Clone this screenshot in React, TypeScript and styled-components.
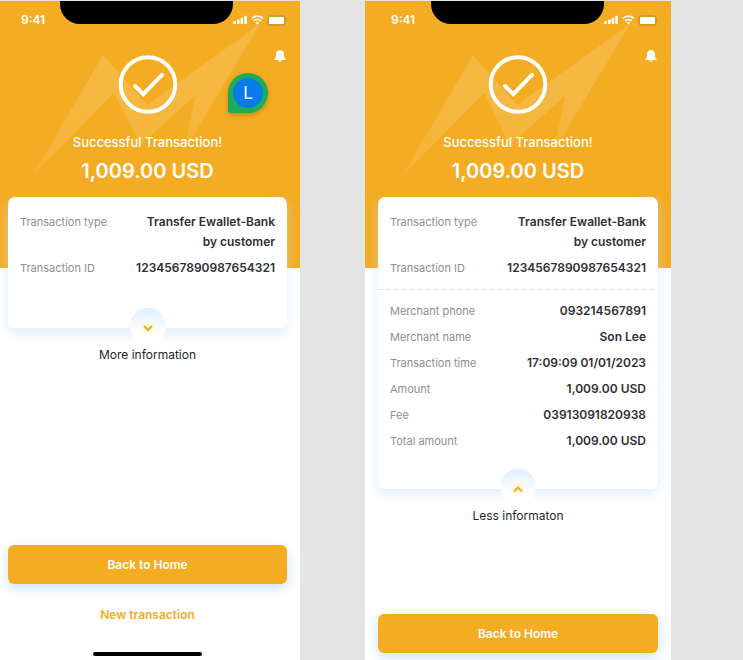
import React, { useId } from "react";
import styled, { createGlobalStyle, css } from "styled-components";

const orange = "#f4ac22";

const GlobalStyle = createGlobalStyle`
  *, *::before, *::after { box-sizing: border-box; }
  body {
    margin: 0;
    background: #e4e4e4;
    font-family: Inter, "Liberation Sans", sans-serif;
    color: #2f2f33;
  }
  button { font: inherit; border: 0; padding: 0; background: none; cursor: pointer; }
`;

const Board = styled.main`
  display: grid;
  grid-template-columns: minmax(0, 300fr) minmax(0, 306fr);
  column-gap: 65px;
  min-height: 100vh;
  padding: 1px 72px 0 0;
`;

const Phone = styled.article<{ $cropped?: boolean }>`
  --side-left: ${(p) => (p.$cropped ? 8 : 13)}px;
  --side-right: 13px;
  position: relative;
  display: flex;
  flex-direction: column;
  overflow: hidden;
  background: #fff;
`;

const Hero = styled.header`
  position: relative;
  display: flex;
  flex-direction: column;
  align-items: center;
  padding: 0 var(--side-right) 84px var(--side-left);
  background: ${orange};
  color: #fff;
`;

const Bolt = styled.svg`
  position: absolute;
  top: 23px;
  left: 50%;
  width: 230px;
  height: 152px;
  margin-left: calc((var(--side-left) - var(--side-right)) / 2 - 115px);
`;

const StatusBar = styled.div`
  display: grid;
  grid-template-columns: 1fr 173px 1fr;
  align-self: stretch;
  height: 38px;
`;

const Clock = styled.time`
  padding-left: 13px;
  font-size: 12px;
  font-weight: 600;
  line-height: 38px;
`;

const Notch = styled.div`
  height: 23px;
  border-radius: 0 0 20px 20px;
  background: #000;
`;

const StatusIcons = styled.div`
  display: flex;
  justify-content: flex-end;
  align-items: center;
  gap: 3px;
  height: 38px;
`;

const BellButton = styled.button`
  align-self: flex-end;
  display: flex;
  height: 16px;
  margin-top: 9px;
  color: #fff;
`;

const CheckMark = styled.svg`
  position: relative;
  width: 60px;
  height: 60px;
  margin-top: -9px;
`;

const Title = styled.h1`
  position: relative;
  margin: 17px 0 0;
  font-size: 13px;
  font-weight: 500;
  line-height: 20px;
`;

const Total = styled.p`
  position: relative;
  margin: 6px 0 0;
  font-size: 20px;
  font-weight: 600;
  line-height: 26px;
`;

const Card = styled.section<{ $open?: boolean }>`
  position: relative;
  margin: -71px var(--side-right) 0 var(--side-left);
  padding: 15px 0 ${(p) => (p.$open ? 38 : 50)}px;
  border-radius: 7px;
  background: #fff;
  box-shadow: 0 6px 12px rgba(200, 224, 252, 0.5);
`;

const Rows = styled.dl<{ $divided?: boolean }>`
  display: grid;
  row-gap: 6px;
  margin: 0;
  padding: 0 12px;
  ${(p) =>
    p.$divided &&
    css`
      margin-top: 11px;
      padding-top: 12px;
      background: repeating-linear-gradient(90deg, #dedede 0 4px, transparent 4px 8px) top / 100% 1px no-repeat;
    `}
`;

const Row = styled.div`
  display: flex;
  justify-content: space-between;
  gap: 12px;
  line-height: 20px;
`;

const Label = styled.dt`
  flex: none;
  color: #8e8e93;
  font-size: 11px;
`;

const Value = styled.dd`
  max-width: 144px;
  margin: 0;
  font-size: 12px;
  font-weight: 600;
  text-align: right;
`;

const Toggle = styled.button`
  position: relative;
  align-self: stretch;
  display: flex;
  flex-direction: column;
  align-items: center;
  gap: 1px;
  margin: -20px var(--side-right) 0 var(--side-left);
  && {
    font-size: 12px;
    line-height: 20px;
  }
  color: #25262c;
`;

const Knob = styled.svg`
  width: 40px;
  height: 36px;
`;

const Footer = styled.footer<{ $spacious?: boolean }>`
  display: flex;
  flex-direction: column;
  align-items: center;
  margin-top: auto;
  padding: 24px var(--side-right) ${(p) => (p.$spacious ? 4 : 7)}px var(--side-left);
`;

const HomeButton = styled.button`
  align-self: stretch;
  && {
    padding: 10px 12px 9px;
    background: ${orange};
  }
  border-radius: 6px;
  box-shadow: 0 4px 12px rgba(150, 200, 250, 0.5);
  color: #fff;
  font-size: 12px;
  font-weight: 600;
  line-height: 20px;
`;

const NewButton = styled.button`
  margin: 21px 0 27px;
  color: ${orange};
  font-size: 12px;
  font-weight: 600;
  line-height: 20px;
`;

const HomeIndicator = styled.div`
  width: 109px;
  height: 4px;
  border-radius: 2px;
  background: #000;
`;

const Pin = styled.div`
  position: absolute;
  top: 72px;
  right: 32px;
  display: flex;
  padding: 5px;
  border-radius: 20px 20px 20px 3px;
  background: #1eab5b;
  box-shadow: 0 2px 5px rgba(0, 0, 0, 0.2);
`;

const Avatar = styled.span`
  width: 30px;
  height: 30px;
  border-radius: 50%;
  background: #087be8;
  color: #fff;
  font-size: 17px;
  line-height: 30px;
  text-align: center;
`;

function Status() {
  return (
    <StatusBar>
      <Clock>9:41</Clock>
      <Notch />
      <StatusIcons>
        <svg width="15" height="10" viewBox="0 0 15 10" fill="#fff" aria-label="Signal">
          <rect x="0" y="6" width="3" height="3" rx="1" />
          <rect x="4" y="4.5" width="2.6" height="4.5" rx="0.8" />
          <rect x="7.6" y="2.7" width="2.6" height="6.3" rx="0.8" />
          <rect x="11.3" y="0.7" width="2.6" height="8.3" rx="0.8" />
        </svg>
        <svg width="13" height="10" viewBox="0 0 13 10" fill="none" stroke="#fff" strokeWidth="1.7" aria-label="Wi-Fi">
          <path d="M0.8 3.5C4 0.4 9 0.4 12.2 3.5" />
          <path d="M3 5.9C5 4.1 8 4.1 10 5.9" />
          <path d="M4.6 7.5C5.6 6.6 7.4 6.6 8.4 7.5L6.5 9.4Z" fill="#fff" stroke="none" />
        </svg>
        <svg width="20" height="11" viewBox="0 0 20 11" aria-label="Battery">
          <rect x="1" y="1" width="17" height="9" rx="2" fill="none" stroke="#b98a2a" />
          <rect x="2" y="2" width="15" height="7" rx="1" fill="#fff" />
          <path d="M19 4V7" stroke="#d69d2b" />
        </svg>
      </StatusIcons>
    </StatusBar>
  );
}

function HeroPanel() {
  const id = useId();
  return (
    <Hero>
      <Bolt viewBox="0 0 230 152" aria-hidden="true">
        <defs>
          <linearGradient id={id} x1="0" y1="0" x2="0" y2="1">
            <stop offset="0.5" stopColor="#fff" stopOpacity="0.14" />
            <stop offset="1" stopColor="#fff" stopOpacity="0.08" />
          </linearGradient>
        </defs>
        <path d="M0 151L70 31L114 81L227 0L151 127L162 72L107 121L81 69Z" fill={`url(#${id})`} />
      </Bolt>
      <Status />
      <BellButton aria-label="Notifications">
        <svg width="14" height="16" viewBox="0 0 14 16" fill="currentColor">
          <path d="M7 2C4.6 2 3 3.8 3 6V9L1.4 11.2V12H12.6V11.2L11 9V6C11 3.8 9.4 2 7 2Z" />
          <path d="M5 12.6H9C8.7 14.4 5.3 14.4 5 12.6Z" />
        </svg>
      </BellButton>
      <CheckMark viewBox="0 0 60 60" fill="none" stroke="#fff" aria-hidden="true">
        <circle cx="30" cy="29.5" r="27.3" strokeWidth="4" />
        <path d="M17 31L25.3 39.2L44 19.8" strokeWidth="4" strokeLinecap="round" />
      </CheckMark>
      <Title>Successful Transaction!</Title>
      <Total>1,009.00 USD</Total>
    </Hero>
  );
}

function InfoToggle({ open, children }: { open?: boolean; children: React.ReactNode }) {
  const id = useId();
  return (
    <Toggle aria-expanded={!!open}>
      <Knob viewBox="0 0 40 36" fill="none" aria-hidden="true">
        <defs>
          <linearGradient id={`${id}f`} x1="0" y1="0" x2="0" y2="1">
            <stop stopColor="#e0eefe" />
            <stop offset="0.65" stopColor="#fff" />
          </linearGradient>
          <radialGradient id={`${id}g`}>
            <stop stopColor="#fff3c9" />
            <stop offset="1" stopColor="#fff9e6" stopOpacity="0" />
          </radialGradient>
        </defs>
        <circle cx="20" cy="18" r="18" fill={`url(#${id}f)`} />
        <circle cx="20" cy="20" r="11" fill={`url(#${id}g)`} />
        <path d={open ? "M16 22.5L20 18.5L24 22.5" : "M16 18L20 22L24 18"} stroke="#e9ae2c" strokeWidth="2" />
      </Knob>
      {children}
    </Toggle>
  );
}

function Details({ items, divided }: { items: string[][]; divided?: boolean }) {
  return (
    <Rows $divided={divided}>
      {items.map(([label, value]) => (
        <Row key={label}>
          <Label>{label}</Label>
          <Value>{value}</Value>
        </Row>
      ))}
    </Rows>
  );
}

const summary = [
  ["Transaction type", "Transfer Ewallet-Bank by customer"],
  ["Transaction ID", "1234567890987654321"],
];

const more = [
  ["Merchant phone", "093214567891"],
  ["Merchant name", "Son Lee"],
  ["Transaction time", "17:09:09 01/01/2023"],
  ["Amount", "1,009.00 USD"],
  ["Fee", "03913091820938"],
  ["Total amount", "1,009.00 USD"],
];

export default function App() {
  return (
    <>
      <GlobalStyle />
      <Board>
        <Phone $cropped>
          <HeroPanel />
          <Card>
            <Details items={summary} />
          </Card>
          <InfoToggle>More information</InfoToggle>
          <Footer $spacious>
            <HomeButton>Back to Home</HomeButton>
            <NewButton>New transaction</NewButton>
            <HomeIndicator />
          </Footer>
          <Pin>
            <Avatar>L</Avatar>
          </Pin>
        </Phone>
        <Phone>
          <HeroPanel />
          <Card $open>
            <Details items={summary} />
            <Details items={more} divided />
          </Card>
          <InfoToggle open>Less informaton</InfoToggle>
          <Footer>
            <HomeButton>Back to Home</HomeButton>
          </Footer>
        </Phone>
      </Board>
    </>
  );
}
